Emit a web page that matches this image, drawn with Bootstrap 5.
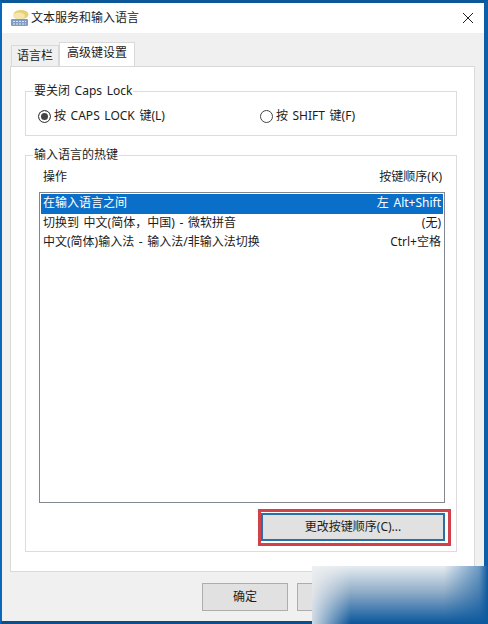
<!DOCTYPE html>
<html lang="zh-CN">
<head>
<meta charset="utf-8">
<title>文本服务和输入语言</title>
<link rel="stylesheet" href="https://cdn.jsdelivr.net/npm/bootstrap@5.3.0/dist/css/bootstrap.min.css">
<style>
html,body{width:488px;height:624px;overflow:hidden;margin:0}
body{font:12px/16px "Noto Sans","Noto Sans CJK SC",sans-serif;word-spacing:1.5px;color:#1c1c1c;background:#f0f0f0;position:relative}
.win{width:488px;height:624px;border-style:solid;border-color:#0b5797 #0b5ea8 #0a4f8c #0a68ba;border-width:3px 4px 3px 2px;background:#f0f0f0}
.ttl{height:30px;background:#fff;padding:0 9px 0 8px}
.appico{width:20px;height:20px;margin-right:1px}
.closex{width:14px;height:14px;background:none;border:0;padding:0}
.tabzone{padding:10px 9px 0 8px}
.tabrow{height:23px;border:0;padding-left:1px;gap:0;align-items:flex-end;flex-wrap:nowrap}
.tabrow .nav-link{font-size:12px;line-height:16px;color:#1c1c1c;border:1px solid #d9d9d9;border-bottom:0;border-radius:0;background:#f0f0f0;height:21px;padding:2px 5px;margin:0}
.tabrow .nav-link.active{background:#fff;height:24px;padding:2px 7px;color:#1c1c1c;border-color:#d9d9d9}
.panel{height:506px;background:#fff;border:1px solid #d9d9d9;padding:0 17px 0 14px}
.grp{border:1px solid #dcdcdc;margin:0;padding:0;position:relative}
.grp1{height:45px;margin-top:24px}
.grp2{height:397px;margin-top:19px}
.grp legend{position:absolute;left:7px;top:-9px;float:none;width:auto;font-size:12px;line-height:16px;margin:0;padding:0 1px;background:#fff;color:#1c1c1c}
.radios{padding:16px 0 0 12px}
.rad{width:13px;height:13px;border:1px solid #444;border-radius:50%;background:#fff;margin-right:3px;flex:none}
.rad.on{background:#444;box-shadow:inset 0 0 0 2px #fff}
.rad2{margin-left:95px}
.hdr{padding:13px 14px 0 17px;height:30px}
.lst{margin:6px 11px 0 13px;height:311px;border:1px solid #828790;border-radius:0;padding:1px;background:#fff;display:block}
.lst .list-group-item{border:0;border-radius:0;padding:1px 2px 2px;height:19.5px;line-height:16px;font-size:12px;background:transparent;color:#1c1c1c;white-space:nowrap}
.lst .list-group-item.active{background:#0a6fc9;color:#fff;height:19.5px}
.hl{border:3px solid #d2414a;margin:6px 5px 0 232px;height:37px;padding:1px 3px 2px 0;background:#fff}
.hl .btn{display:block;width:100%;height:28px;border:2px solid #2a6fa8;border-radius:0;background:#e1e1e1;color:#1c1c1c;font-size:12px;line-height:16px;padding:4px 0}
.foot{padding:11px 0 0 192px}
.foot .btn{width:86px;height:28px;background:#e1e1e1;border:1px solid #adadad;border-radius:0;color:#1c1c1c;font-size:12px;line-height:16px;padding:0;margin-right:9px}
.wm{position:absolute;left:312px;top:566px;width:176px;height:58px;background:linear-gradient(to right,rgba(240,240,240,.85),rgba(240,240,240,0) 22%),linear-gradient(to left,#0d5a9f 0,rgba(13,90,159,.55) 5%,rgba(13,90,159,0) 25%),linear-gradient(to bottom,#e6ecf1 0,#8facc7 45%,#2d6ea8 85%,#0d5599 100%)}
</style>
</head>
<body>
<div class="win d-flex flex-column">
  <div class="ttl d-flex align-items-center">
    <svg class="appico" viewBox="0 0 20 20"><ellipse cx="11" cy="6.5" rx="7.5" ry="4.5" fill="#e8cf76"/><ellipse cx="9" cy="8" rx="6" ry="3.5" fill="#f3e6ae"/><rect x="1" y="11" width="17" height="7" rx="1" fill="#7f9cc4"/><path d="M3 13.5h13M3 16h13" stroke="#dfe8f4" stroke-width="1" stroke-dasharray="2 1"/></svg>
    <span class="flex-grow-1">文本服务和输入语言</span>
    <button class="closex d-flex" type="button" aria-label="关闭"><svg width="14" height="14" viewBox="0 0 14 14"><path d="M2 2l10 10M12 2L2 12" stroke="#222" stroke-width="1" fill="none"/></svg></button>
  </div>
  <div class="tabzone">
    <ul class="nav nav-tabs tabrow">
      <li class="nav-item"><a class="nav-link" href="#">语言栏</a></li>
      <li class="nav-item"><a class="nav-link active" href="#">高级键设置</a></li>
    </ul>
    <div class="panel">
      <fieldset class="grp grp1">
        <legend>要关闭 Caps Lock</legend>
        <div class="radios d-flex align-items-center">
          <span class="rad on"></span><span>按 CAPS LOCK 键(L)</span>
          <span class="rad rad2"></span><span>按 SHIFT 键(F)</span>
        </div>
      </fieldset>
      <fieldset class="grp grp2">
        <legend>输入语言的热键</legend>
        <div class="hdr d-flex justify-content-between"><span>操作</span><span>按键顺序(K)</span></div>
        <div class="list-group lst">
          <div class="list-group-item active d-flex justify-content-between"><span>在输入语言之间</span><span>左 Alt+Shift</span></div>
          <div class="list-group-item d-flex justify-content-between"><span>切换到 中文(简体，中国) - 微软拼音</span><span>(无)</span></div>
          <div class="list-group-item d-flex justify-content-between"><span>中文(简体)输入法 - 输入法/非输入法切换</span><span>Ctrl+空格</span></div>
        </div>
        <div class="hl"><button class="btn" type="button">更改按键顺序(C)...</button></div>
      </fieldset>
    </div>
    <div class="foot d-flex">
      <button class="btn" type="button">确定</button>
      <button class="btn" type="button">取消</button>
    </div>
  </div>
</div>
<div class="wm"></div>
<script src="https://cdn.jsdelivr.net/npm/bootstrap@5.3.0/dist/js/bootstrap.bundle.min.js"></script>
</body>
</html>
